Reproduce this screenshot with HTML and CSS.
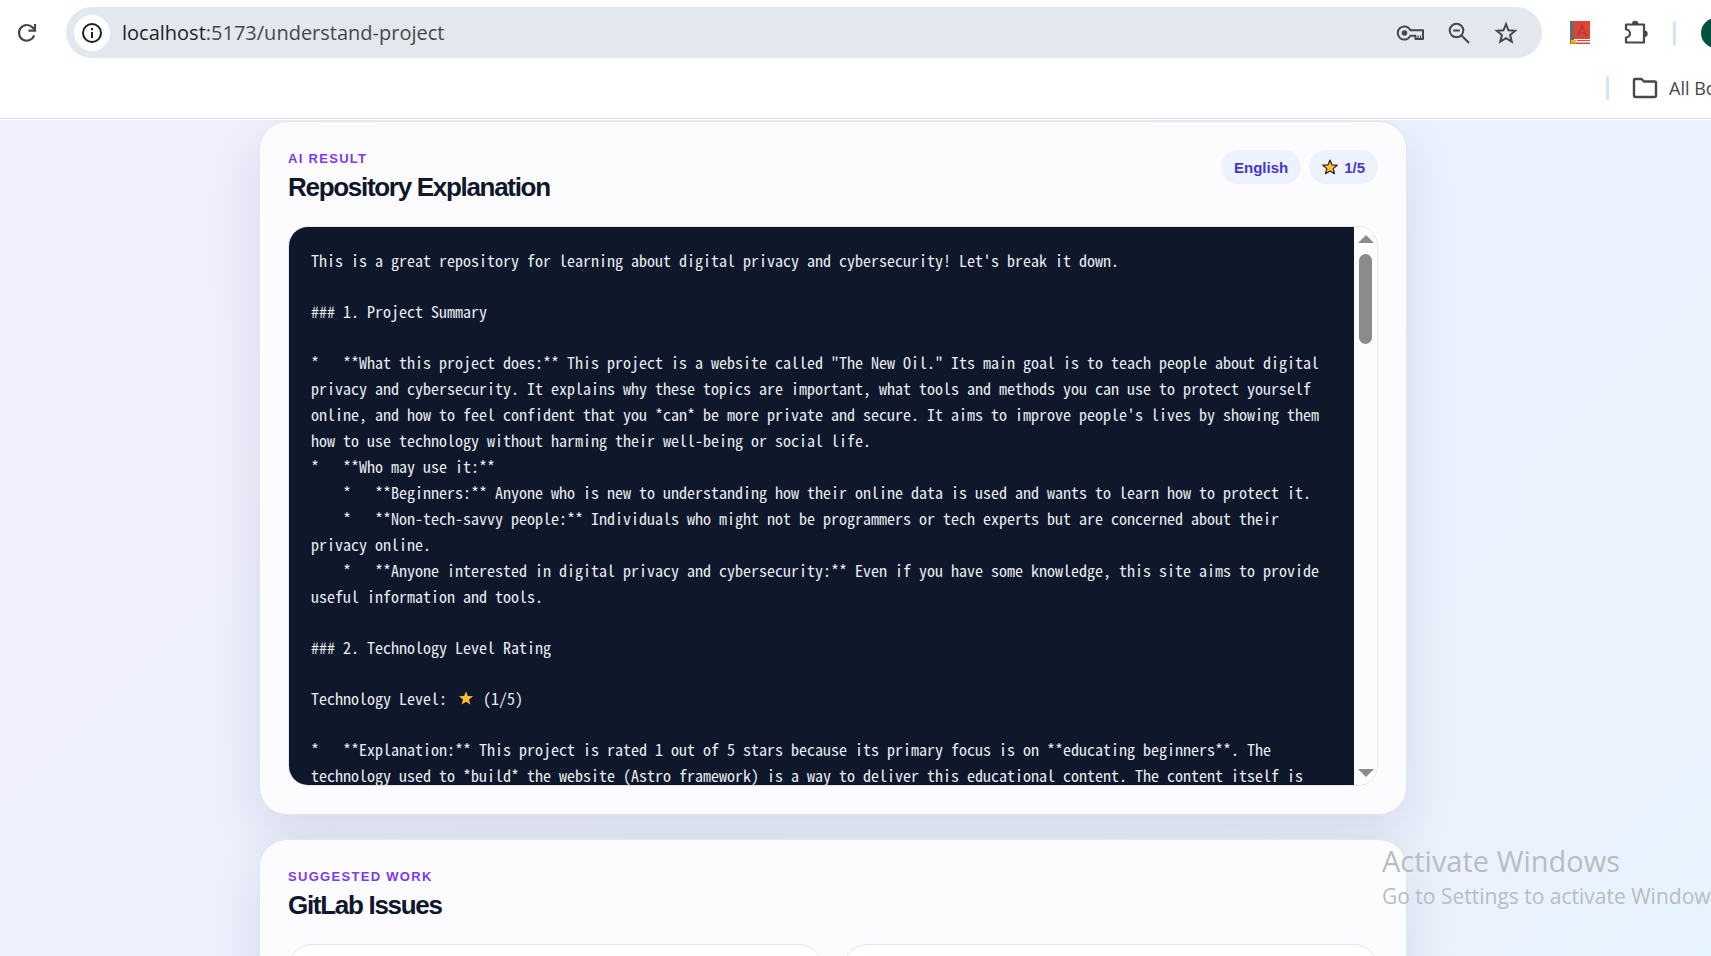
FILE: index.html
```html
<!DOCTYPE html>
<html lang="en">
<head>
<meta charset="utf-8">
<title>Understand Project</title>
<link rel="stylesheet" href="styles.css">
</head>
<body>
<header class="browser">
  <div class="toolbar">
    <button class="icon-btn" aria-label="Reload">
      <svg width="20" height="20" viewBox="0 0 20 20" fill="none" stroke="#474747" stroke-width="2.2"><path d="M17.2 12.3A7.8 7.8 0 1 1 15.6 4.6L18 7"/><path d="M18 1v6.6h-6.6"/></svg>
    </button>
    <div class="omnibox">
      <button class="site-info" aria-label="Site information">
        <svg width="22" height="22" viewBox="0 0 22 22" fill="none" stroke="#1f1f1f" stroke-width="2"><circle cx="11" cy="11" r="9"/><path d="M11 10v6M11 6v2.2"/></svg>
      </button>
      <p class="url"><span class="host">localhost</span>:5173/understand-project</p>
      <button class="icon-btn" aria-label="Passwords">
        <svg width="28" height="18" viewBox="0 0 28 18" fill="none" stroke="#474747" stroke-width="2"><path d="M14.3 6.2A6.600 6.600 0 1 0 14.3 11.8H19.500V15H27V6.200Z" stroke-linejoin="round"/><circle cx="8.500" cy="9" r="2.800" fill="#474747" stroke="none"/><path d="M22 11.500v3.500M24.500 11.500v3.500" stroke-width="1.200"/></svg>
      </button>
      <button class="icon-btn" aria-label="Zoom">
        <svg width="22" height="22" viewBox="0 0 22 22" fill="none" stroke="#474747" stroke-width="2"><circle cx="8.500" cy="8.500" r="6.800"/><path d="M13.500 13.500L21 21M5.200 8.500h6.600"/></svg>
      </button>
      <button class="icon-btn" aria-label="Bookmark this tab">
        <svg width="24" height="24" viewBox="0 0 24 24" fill="none" stroke="#474747" stroke-width="2"><path d="M12 3.200L14.500 9.300L21.100 9.800L16.100 14.100L17.700 20.600L12 17.100L6.300 20.600L7.900 14.100L2.900 9.800L9.500 9.300Z"/></svg>
      </button>
    </div>
    <button class="icon-btn" aria-label="Dictionary">
      <svg width="22" height="25" viewBox="0 0 22 25"><path fill="#6b6b6b" d="M1 1h4.500v23H1z"/><path fill="#db4437" d="M5 1h16v18H5z"/><path fill="#fff" d="M5 19h16v5H5z"/><path fill="#db4437" d="M5 22.500h16V24H5zM8 20h13v1H8z"/><path d="M8.500 16.500L13 5.500l4.500 11M10.300 12.800h5.400" fill="none" stroke="#b93a30" stroke-width="1.800"/><path fill="#f4b400" d="M2 20h5v4l-2.500-1L2 24.500z"/></svg>
    </button>
    <button class="icon-btn" aria-label="Extensions">
      <svg width="26" height="26" viewBox="0 0 26 26"><path d="M3 4.500H21V22.500H3V17.500A4 4 0 0 0 3 9.500Z" fill="none" stroke="#474747" stroke-width="2.200" stroke-linejoin="round"/><path fill="#474747" d="M9 4a3.200 3.200 0 0 1 6.400 0zM21.500 10.500a3.200 3.200 0 0 1 0 6.400z"/></svg>
    </button>
    <span class="divider"></span>
    <span class="avatar"></span>
  </div>
  <div class="bookmarks">
    <span class="divider"></span>
    <button class="bookmark-folder">
      <svg width="26" height="22" viewBox="0 0 26 22" fill="none" stroke="#474747" stroke-width="2.400" stroke-linejoin="round"><path d="M2.500 2H9.500L12 4.500H22.500Q24 4.500 24 6V18.500Q24 20 22.500 20H3.500Q2 20 2 18.500V2.500Z"/></svg>
      <span class="folder-name">All Bo</span>
    </button>
  </div>
</header>
<main class="page">
  <section class="card">
    <div class="card-head">
      <div>
        <p class="eyebrow">AI RESULT</p>
        <h2>Repository Explanation</h2>
      </div>
      <div class="pills">
        <span class="pill">English</span>
        <span class="pill"><svg class="star" width="16" height="16" viewBox="0 0 16 16"><path d="M8 1L10 5.800L15.200 6.200L11.200 9.600L12.500 14.700L8 11.900L3.500 14.700L4.800 9.600L.8 6.200L6 5.800Z" fill="#ffbe32" stroke="#2b2418" stroke-width="1.200" stroke-linejoin="round"/></svg>1/5</span>
      </div>
    </div>
    <div class="viewer">
      <div class="output">
<pre>This is a great repository for learning about digital privacy and cybersecurity! Let's break it down.</pre>
<pre>### 1. Project Summary</pre>
<pre>*   **What this project does:** This project is a website called "The New Oil." Its main goal is to teach people about digital
privacy and cybersecurity. It explains why these topics are important, what tools and methods you can use to protect yourself
online, and how to feel confident that you *can* be more private and secure. It aims to improve people's lives by showing them
how to use technology without harming their well-being or social life.
*   **Who may use it:**
    *   **Beginners:** Anyone who is new to understanding how their online data is used and wants to learn how to protect it.
    *   **Non-tech-savvy people:** Individuals who might not be programmers or tech experts but are concerned about their
privacy online.
    *   **Anyone interested in digital privacy and cybersecurity:** Even if you have some knowledge, this site aims to provide
useful information and tools.</pre>
<pre>### 2. Technology Level Rating</pre>
<pre>Technology Level: <svg class="rating" width="20" height="14" viewBox="0 0 20 14"><path d="M11 .2L12.800 5L18 5.300L14 8.500L15.400 13.600L11 10.700L6.600 13.600L8 8.500L4 5.300L9.200 5Z" fill="#ffbe32"/></svg> (1/5)</pre>
<pre>*   **Explanation:** This project is rated 1 out of 5 stars because its primary focus is on **educating beginners**. The
technology used to *build* the website (Astro framework) is a way to deliver this educational content. The content itself is</pre>
      </div>
      <div class="scrollbar">
        <svg width="16" height="8" viewBox="0 0 16 8"><path fill="#8b8b8b" d="M8 0l8 8H0z"/></svg>
        <span class="thumb"></span>
        <svg width="16" height="8" viewBox="0 0 16 8"><path fill="#8b8b8b" d="M0 0h16L8 8z"/></svg>
      </div>
    </div>
  </section>
  <section class="card">
    <div class="card-head">
      <div>
        <p class="eyebrow">SUGGESTED WORK</p>
        <h2>GitLab Issues</h2>
      </div>
    </div>
    <div class="issues">
      <article class="issue"></article>
      <article class="issue"></article>
    </div>
  </section>
</main>
<aside class="watermark">
  <p class="watermark-title">Activate Windows</p>
  <p class="watermark-text">Go to Settings to activate Window</p>
</aside>
</body>
</html>
```
FILE: styles.css
```css
* { box-sizing: border-box; }

body {
  margin: 0;
  height: 100vh;
  display: flex;
  flex-direction: column;
  overflow: hidden;
  font-family: "Liberation Sans", Arial, sans-serif;
  color: #0f172a;
}

p, h2, pre { margin: 0; }

button {
  border: 0;
  padding: 0;
  background: none;
  font: inherit;
  color: inherit;
}

.browser {
  flex: none;
  background: #fff;
  border-bottom: 1px solid #dfe3e1;
  box-shadow: 0 1px 0 #fff;
  font-family: "Open Sans", "Noto Sans", sans-serif;
  position: relative;
  z-index: 1;
}

.toolbar {
  display: flex;
  align-items: center;
  padding: 7px 0 0 17px;
  overflow: hidden;
}

.icon-btn { display: flex; flex: none; }

.omnibox {
  flex: 1;
  display: flex;
  align-items: center;
  gap: 24px;
  height: 51px;
  margin: 0 27px 0 29px;
  padding: 0 24px 0 8px;
  border-radius: 26px;
  background: #e3e8ef;
}

.site-info {
  display: flex;
  align-items: center;
  justify-content: center;
  width: 36px;
  height: 36px;
  border-radius: 50%;
  background: #fff;
}

.url {
  flex: 1;
  margin-left: -12px;
  font-size: 20px;
  line-height: 28px;
  color: #474747;
}

.host { color: #1f1f1f; }

.toolbar > .icon-btn + .icon-btn { margin-left: 32px; }

.divider {
  flex: none;
  width: 3px;
  height: 24px;
  border-radius: 2px;
  background: #d3e3fd;
}

.toolbar .divider { margin: 0 25px 0 24px; }

.avatar {
  flex: none;
  width: 30px;
  height: 30px;
  margin-right: -20px;
  border-radius: 50%;
  background: #00513f;
}

.bookmarks {
  display: flex;
  align-items: center;
  justify-content: flex-end;
  gap: 23px;
  height: 60px;
}

.bookmark-folder {
  display: flex;
  align-items: center;
  gap: 11px;
  color: #474747;
}

.folder-name {
  width: 42px;
  overflow: hidden;
  white-space: nowrap;
  text-align: left;
  font-size: 18px;
  line-height: 24px;
}

.page {
  flex: 1;
  min-height: 0;
  display: flex;
  flex-direction: column;
  gap: 24px;
  padding: 2px 304px 0 259px;
  overflow: hidden;
  background: linear-gradient(135deg, #f2eefe 0%, #eff0fe 30%, #ebf1fe 60%, #ebf2fe 88%, #e6f4ff 100%);
}

.card {
  flex: none;
  padding: 28px;
  border: 1px solid #e2e6f0;
  border-radius: 28px;
  background: #fcfcff;
  box-shadow: 0 22px 54px rgba(15, 23, 42, 0.1);
}

.card-head {
  display: flex;
  justify-content: space-between;
  align-items: flex-start;
  margin-bottom: 24px;
}

.eyebrow {
  margin-top: 1px;
  font-size: 13px;
  line-height: 16px;
  font-weight: 700;
  letter-spacing: 0.1em;
  color: #7c3aed;
}

.card-head h2 {
  margin-top: 5px;
  font-size: 26px;
  line-height: 30px;
  letter-spacing: -0.05em;
}

.pills { display: flex; gap: 8px; }

.pill {
  display: flex;
  align-items: center;
  gap: 6px;
  height: 34px;
  padding: 0 13px;
  border-radius: 17px;
  background: #eef2ff;
  color: #4338ca;
  font-size: 15px;
  font-weight: 700;
}

.viewer {
  display: flex;
  height: 560px;
  border: 1px solid #e2e8f0;
  border-radius: 20px;
  overflow: hidden;
}

.output {
  flex: 1;
  min-width: 0;
  display: flex;
  flex-direction: column;
  gap: 25px;
  padding: 20px 22px;
  overflow: hidden;
  background: #0f172a;
  color: #e8edf3;
}

.output pre {
  flex: none;
  font-family: "Noto Sans Mono CJK SC", "Liberation Mono", monospace;
  font-size: 16px;
  line-height: 26px;
}

.scrollbar {
  flex: none;
  width: 23px;
  display: flex;
  flex-direction: column;
  align-items: center;
  padding: 8px 0;
  background: #fcfcfc;
}

.thumb {
  width: 13px;
  height: 90px;
  margin: 11px 0 auto;
  border-radius: 7px;
  background: #8b8b8b;
}

.issues {
  display: grid;
  grid-template-columns: 1fr 1fr;
  gap: 20px;
}

.issue {
  height: 200px;
  border: 1px solid #dfe7f0;
  border-radius: 24px;
  background: #fff;
}

.watermark {
  position: absolute;
  right: 0;
  bottom: 45px;
  z-index: 2;
  width: 329px;
  overflow: hidden;
  white-space: nowrap;
  font-family: "Open Sans", "Noto Sans", sans-serif;
  color: #b9bcc1;
}

.watermark-title { font-size: 29px; line-height: 40px; }
.watermark-text { font-size: 21px; line-height: 30px; }
```
